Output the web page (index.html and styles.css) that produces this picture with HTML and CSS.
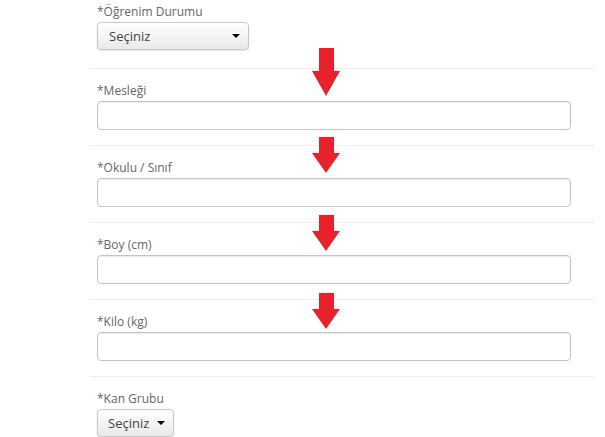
FILE: index.html
```html
<!DOCTYPE html>
<html lang="tr">
<head>
<meta charset="utf-8">
<link rel="stylesheet" href="styles.css">
</head>
<body>
<div class="form">
  <div class="group first">
    <label class="lbl">*Öğrenim Durumu</label>
    <div class="select wide"><span>Seçiniz</span><i class="caret"></i></div>
  </div>
  <div class="group">
    <label class="lbl">*Mesleği</label>
    <div class="input"></div>
  </div>
  <div class="group">
    <label class="lbl">*Okulu / Sınıf</label>
    <div class="input"></div>
  </div>
  <div class="group">
    <label class="lbl">*Boy (cm)</label>
    <div class="input"></div>
  </div>
  <div class="group">
    <label class="lbl">*Kilo (kg)</label>
    <div class="input"></div>
  </div>
  <div class="group">
    <label class="lbl">*Kan Grubu</label>
    <div class="select narrow"><span>Seçiniz</span><i class="caret"></i></div>
  </div>

  <svg class="arrow a1" width="28" height="48" viewBox="0 0 28 48"><path d="M7 0H22V23H28L14 48L0 23H7Z" fill="#e8212a"/></svg>
  <svg class="arrow a2" width="28" height="36" viewBox="0 0 28 36"><path d="M7 0H22V16H28L14 36L0 16H7Z" fill="#e8212a"/></svg>
  <svg class="arrow a3" width="28" height="36" viewBox="0 0 28 36"><path d="M7 0H22V16H28L14 36L0 16H7Z" fill="#e8212a"/></svg>
  <svg class="arrow a4" width="28" height="36" viewBox="0 0 28 36"><path d="M7 0H22V16H28L14 36L0 16H7Z" fill="#e8212a"/></svg>
</div>
</body>
</html>
```
FILE: styles.css
```css
html, body {
  margin: 0;
  background: #fff;
}
body {
  font-family: "Open Sans", "Noto Sans", sans-serif;
  color: #666;
}
.form {
  position: relative;
  margin-left: 90px;
  width: 505px;
}
.group {
  border-top: 1px solid #efefef;
  padding: 13px 7px 15px;
}
.group.first {
  border-top: none;
  padding-top: 3px;
  padding-bottom: 18px;
}
.lbl {
  display: block;
  font-size: 12px;
  line-height: 17px;
  color: #666;
  margin-bottom: 2px;
}
.select {
  box-sizing: border-box;
  height: 28px;
  display: flex;
  align-items: center;
  justify-content: space-between;
  padding: 0 8px 0 11px;
  border: 1px solid #c8c8c8;
  border-radius: 4px;
  background: linear-gradient(#ffffff, #e9e9e9);
  box-shadow: 0 1px 2px rgba(0,0,0,0.12);
  font-size: 13px;
  color: #444;
}
.select.wide { width: 152px; }
.select.narrow { width: 77px; padding-left: 10px; }
.caret {
  width: 0;
  height: 0;
  border-left: 4px solid transparent;
  border-right: 4px solid transparent;
  border-top: 4px solid #000;
}
.input {
  box-sizing: border-box;
  width: 474px;
  height: 29px;
  border: 1px solid #c4c4c4;
  border-radius: 4px;
  background: #fff;
  box-shadow: inset 0 1px 1px rgba(0,0,0,0.08);
}
.arrow {
  position: absolute;
  left: 222px;
}
.a1 { top: 48px; }
.a2 { top: 137px; }
.a3 { top: 215px; }
.a4 { top: 293px; }
```
